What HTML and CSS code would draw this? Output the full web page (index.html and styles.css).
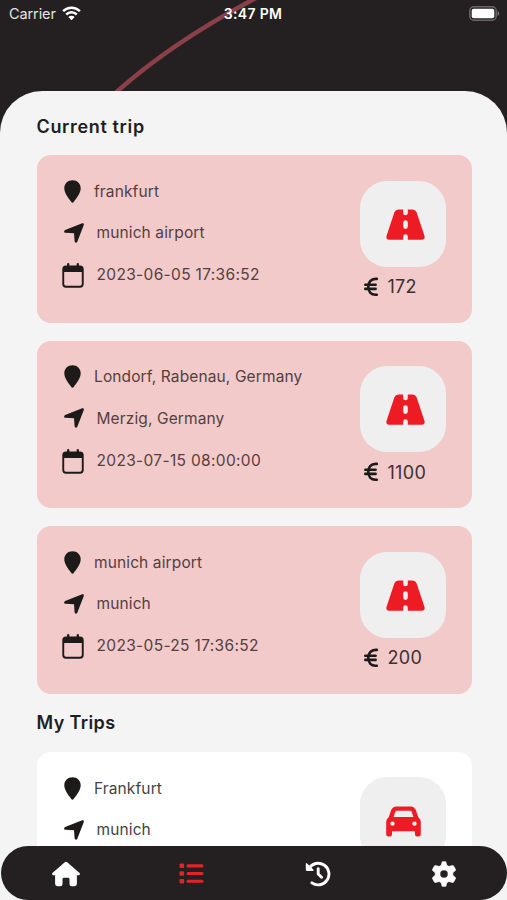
FILE: index.html
```
<!DOCTYPE html>
<html lang="en">
<head>
<meta charset="utf-8">
<title>Trips</title>
<link rel="stylesheet" href="styles.css">
</head>
<body>
<svg class="defs" aria-hidden="true">
  <symbol id="pin" viewBox="0 0 17 23"><path d="M8.5 0.3C3.8 .3.3 3.8.3 8.3c0 4.400 3.800 9.600 7 13.700.7.9 1.700.9 2.400 0 3.200-4.100 7-9.300 7-13.700C16.700 3.800 13.200.300 8.500.300Z"/></symbol>
  <symbol id="arrow" viewBox="0 0 20 20"><path d="M18.200.300 1.100 7C-.400 7.800-.100 9.700 1.400 9.800L10 10.300 10.600 18.300C10.800 20 12.600 20.200 13.300 18.800L19.800 1.900C20.200.800 19.200-.100 18.200.300Z"/></symbol>
  <symbol id="calendar" viewBox="0 0 22 25"><path d="M4 2.600H18Q21.700 2.600 21.700 6.300V21Q21.700 24.700 18 24.700H4Q.300 24.700.300 21V6.300Q.300 2.600 4 2.600ZM2.200 9V21Q2.200 22.800 4 22.800H18Q19.800 22.800 19.800 21V9Z" fill-rule="evenodd"/><path d="M6.200 1.200V4M15.800 1.200V4" stroke="currentColor" stroke-width="2.300" stroke-linecap="round"/></symbol>
  <symbol id="road" viewBox="0 0 39 31"><path fill-rule="evenodd" d="M12.500.500H17.200V4Q17.200 6.300 19.500 6.300T21.800 4V.500H26.500Q29.500.500 30.600 3.200L38.500 27Q39.300 30.800 36 30.800H21.800V27.500Q21.800 25.200 19.500 25.200T17.200 27.500V30.800H3Q-.300 30.800.500 27L8.400 3.200Q9.500.500 12.500.500ZM19.500 11.200Q17.200 11.200 17.200 13.500V17.600Q17.200 19.900 19.500 19.900T21.800 17.600V13.500Q21.800 11.200 19.500 11.200Z"/></symbol>
  <symbol id="euro" viewBox="0 0 15 20"><path d="M12.800 1.900H11.600C6.900 1.900 4.300 5 4.300 9.800S6.900 17.800 11.600 17.800H12.800M1.300 7.800H11.600M1.300 11.900H11.600" fill="none" stroke="currentColor" stroke-width="2.600" stroke-linecap="round"/></symbol>
  <symbol id="car" viewBox="0 0 35 31"><path fill-rule="evenodd" d="M10.500.500H24.500Q28.500.500 29.900 4.300L32.300 11.200Q34.800 12.700 34.800 15.800V28.500Q34.800 30.500 32.800 30.500H31Q29 30.500 29 28.500V25.300H6V28.500Q6 30.500 4 30.500H2.200Q.200 30.500.200 28.500V15.800Q.200 12.700 2.700 11.200L5.100 4.300Q6.500.500 10.500.500ZM10.800 4.800Q9.600 4.800 9.200 6L7.600 11H27.400L25.800 6Q25.400 4.800 24.200 4.800ZM6.500 15.400a2.200 2.200 0 1 0 0 4.400 2.200 2.200 0 0 0 0-4.400ZM28.500 15.400a2.200 2.200 0 1 0 0 4.400 2.200 2.200 0 0 0 0-4.400Z"/></symbol>
</svg>
<div class="screen">
  <svg class="arc" viewBox="0 0 507 92"><path d="M112 96Q169 44 256-2" fill="none" stroke="#8a3f49" stroke-width="4.500"/></svg>
  <header class="status">
    <div class="carrier"><span>Carrier</span>
      <svg width="19" height="15" viewBox="0 0 19 15"><g fill="none" stroke="#fff" stroke-width="2.500"><path d="M1.100 5.200a12 12 0 0 1 16.800 0M4.200 8.500a7.600 7.600 0 0 1 10.600 0"/></g><path d="M9.500 14.200 6.300 11a4.600 4.600 0 0 1 6.400 0Z" fill="#fff"/></svg>
    </div>
    <span class="time">3:47 PM</span>
    <svg class="battery" width="31" height="15" viewBox="0 0 31 15"><rect x=".8" y=".8" width="26.400" height="13.400" rx="4" fill="none" stroke="#68656a" stroke-width="1.500"/><rect x="2.700" y="2.700" width="22.600" height="9.600" rx="2" fill="#fff"/><path d="M28.600 5v5c2.200-1 2.200-4 0-5Z" fill="#77747a"/></svg>
  </header>
  <main class="sheet">
    <h2>Current trip</h2>
    <section class="trips">
      <article class="card">
        <ul class="details">
          <li><svg class="pin"><use href="#pin"/></svg><span>frankfurt</span></li>
          <li><svg class="arrow"><use href="#arrow"/></svg><span>munich airport</span></li>
          <li><svg class="calendar"><use href="#calendar"/></svg><span class="date">2023-06-05 17:36:52</span></li>
        </ul>
        <div class="fare"><div class="tile"><svg class="road"><use href="#road"/></svg></div><div class="price"><svg class="euro"><use href="#euro"/></svg><span>172</span></div></div>
      </article>
      <article class="card">
        <ul class="details">
          <li><svg class="pin"><use href="#pin"/></svg><span>Londorf, Rabenau, Germany</span></li>
          <li><svg class="arrow"><use href="#arrow"/></svg><span>Merzig, Germany</span></li>
          <li><svg class="calendar"><use href="#calendar"/></svg><span class="date">2023-07-15 08:00:00</span></li>
        </ul>
        <div class="fare"><div class="tile"><svg class="road"><use href="#road"/></svg></div><div class="price"><svg class="euro"><use href="#euro"/></svg><span>1100</span></div></div>
      </article>
      <article class="card">
        <ul class="details">
          <li><svg class="pin"><use href="#pin"/></svg><span>munich airport</span></li>
          <li><svg class="arrow"><use href="#arrow"/></svg><span>munich</span></li>
          <li><svg class="calendar"><use href="#calendar"/></svg><span class="date">2023-05-25 17:36:52</span></li>
        </ul>
        <div class="fare"><div class="tile"><svg class="road"><use href="#road"/></svg></div><div class="price"><svg class="euro"><use href="#euro"/></svg><span>200</span></div></div>
      </article>
    </section>
    <h2 class="mine">My Trips</h2>
    <section class="trips">
      <article class="card plain">
        <ul class="details">
          <li><svg class="pin"><use href="#pin"/></svg><span>Frankfurt</span></li>
          <li><svg class="arrow"><use href="#arrow"/></svg><span>munich</span></li>
        </ul>
        <div class="fare"><div class="tile"><svg class="car"><use href="#car"/></svg></div></div>
      </article>
    </section>
  </main>
  <nav class="tabs">
    <a><svg width="28" height="26" viewBox="0 0 28 26"><path fill="currentColor" d="M12.800 1.200Q14 .200 15.200 1.200L27.300 11.800C28.600 13 27.600 14.200 26.600 14.200H24.900V22.800Q24.900 25.200 22.500 25.200H19.600Q17.500 25.200 17.500 23V18.200Q17.500 16.800 16.100 16.800H11.900Q10.500 16.800 10.500 18.200V23Q10.500 25.200 8.400 25.200H5.500Q3.100 25.200 3.100 22.800V14.200H1.400C.400 14.200-.600 13 .700 11.800Z"/></svg></a>
    <a class="active"><svg width="25" height="21" viewBox="0 0 25 21"><g fill="currentColor"><rect x=".5" y=".5" width="4.600" height="4.600" rx="1"/><rect x=".5" y="8.200" width="4.600" height="4.600" rx="1"/><rect x=".5" y="15.900" width="4.600" height="4.600" rx="1"/><rect x="7.500" y="1.300" width="17" height="3.100" rx="1.500"/><rect x="7.500" y="9" width="17" height="3.100" rx="1.500"/><rect x="7.500" y="16.700" width="17" height="3.100" rx="1.500"/></g></svg></a>
    <a><svg width="26" height="26" viewBox="0 0 26 26"><path d="M4 7.300A10.800 10.800 0 1 1 6.900 21.900M13.200 7.700V13L16.500 16.200" fill="none" stroke="currentColor" stroke-width="2.900" stroke-linecap="round"/><path fill="currentColor" d="M.800 2.500Q1.100 1.700 2.100 2.400L8.300 8.600Q9 9.700 7.900 9.900H1.900Q.800 9.900.800 8.800Z"/></svg></a>
    <a><svg width="24" height="26" viewBox="0 0 24 26"><path fill="currentColor" fill-rule="evenodd" d="M10.200.700H13.800L14.700 4.200 17 5.500 20.500 4.500Q21.200 4.400 21.600 5L23.500 8.500Q23.700 9.100 23.300 9.600L20.800 11.700V14.300L23.300 16.400Q23.700 16.900 23.500 17.500L21.600 21Q21.200 21.600 20.500 21.500L17 20.500 14.700 21.800 13.900 25.300H10.100L9.300 21.800 7 20.500 3.500 21.500Q2.800 21.600 2.400 21L.500 17.500Q.300 16.900.700 16.400L3.200 14.300V11.700L.700 9.600Q.300 9.100.500 8.500L2.400 5Q2.800 4.400 3.500 4.500L7 5.500 9.300 4.200ZM12 8.900a4.100 4.100 0 1 0 0 8.200 4.100 4.100 0 0 0 0-8.200Z" stroke="currentColor" stroke-width=".7" stroke-linejoin="round"/></svg></a>
  </nav>
</div>
</body>
</html>
```
FILE: styles.css
```
* { box-sizing: border-box; }
body { margin: 0; font-family: Inter, sans-serif; }
.defs { position: absolute; width: 0; height: 0; }
.screen { position: relative; width: 507px; height: 900px; overflow: hidden; background: #242021; display: flex; flex-direction: column; }
.arc { position: absolute; top: 0; left: 0; width: 507px; height: 92px; }
.status { position: relative; height: 91px; flex: none; display: grid; grid-template-columns: 1fr auto 1fr; align-items: start; padding: 5px 7px 0 6px; color: #fff; font-size: 14.5px; line-height: 18px; }
.carrier { display: flex; gap: 6px; padding-left: 3px; color: #e4e3e4; letter-spacing: -.1px; }
.carrier svg { margin-top: 1px; }
.time { font-weight: 600; font-size: 14px; letter-spacing: .35px; }
.battery { justify-self: end; margin-top: 1px; }
.sheet { flex: 1; min-height: 0; overflow: hidden; background: #f4f4f4; border-radius: 42px 42px 0 0; padding: 24px 35.5px 0 36.5px; position: relative; }
h2 { margin: 0; height: 40px; font-size: 18px; line-height: 23px; font-weight: 600; letter-spacing: .65px; color: #201e1f; }
.mine { margin-top: 17px; height: 41px; letter-spacing: .38px; }
.trips { display: flex; flex-direction: column; gap: 18px; }
.card { height: 167.6px; flex: none; border-radius: 14px; background: #f2caca; padding: 15px 25.5px 0 26px; display: flex; justify-content: space-between; color: #1d1b1a; }
.plain { background: #fff; }
.details { list-style: none; margin: 0; padding: 0; }
.details li { display: flex; align-items: center; height: 41.5px; font-size: 15.5px; letter-spacing: .12px; }
.details span { color: #54403f; white-space: nowrap; margin-top: 1px; }
.plain .details span { color: #444; }
svg { display: block; fill: currentColor; flex: none; }
.pin { width: 17px; height: 23px; margin: 1px 13px 0 1.5px; }
.arrow { width: 20px; height: 20px; margin: 1px 12.5px 0 1.5px; }
.calendar { width: 22px; height: 25px; margin: 4px 12.5px 0 -.5px; }
.details .date { margin-top: 2px; letter-spacing: .33px; }
.fare { width: 86px; padding-top: 10.5px; }
.tile { width: 86px; height: 86px; border-radius: 27px; background: #efefef; color: #ed1c24; display: flex; align-items: center; justify-content: center; }
.road { width: 39px; height: 31px; margin: 1px 0 0 4px; }
.car { width: 35px; height: 31px; margin-top: 2px; }
.price { display: flex; align-items: center; gap: 9px; height: 24px; margin: 8px 0 0 3.5px; font-size: 18px; letter-spacing: .3px; }
.price span { color: #40302f; }
.euro { width: 15px; height: 20px; }
.tabs { position: absolute; left: 1px; right: 0; bottom: 0; height: 54px; border-radius: 27px; background: #242021; color: #fff; display: grid; grid-template-columns: repeat(4, 126px); justify-content: center; padding: 1px 0 0 1px; }
.tabs a { display: flex; align-items: center; justify-content: center; }
.tabs .active { color: #e32229; }
```
